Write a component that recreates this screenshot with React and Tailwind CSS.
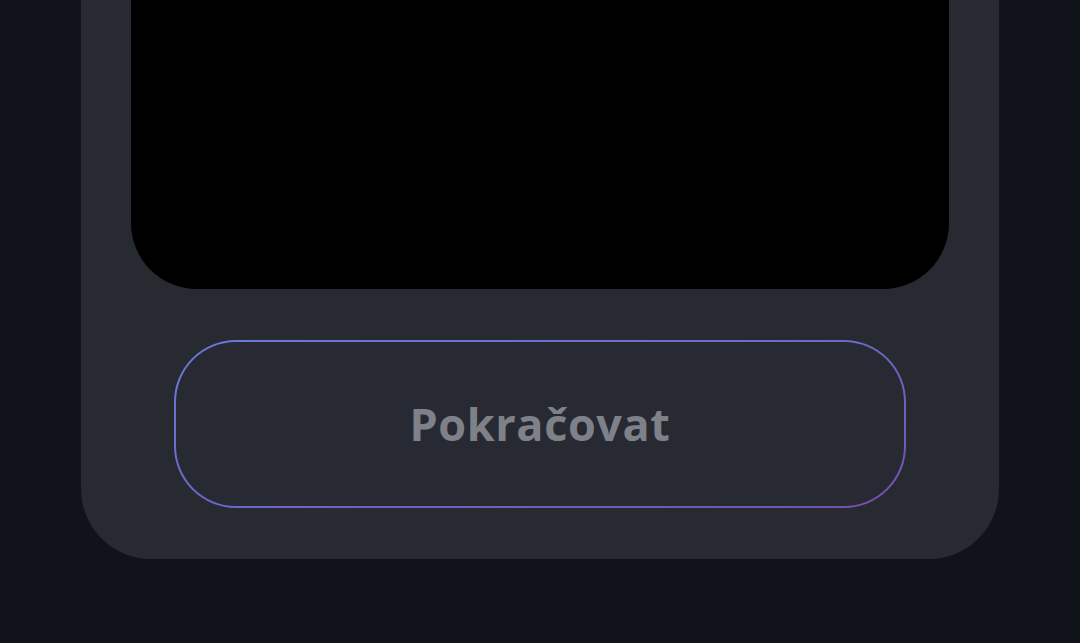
import React from 'react';

export default function App() {
  return (
    <div className="h-[643px] w-[1080px] overflow-hidden bg-[#10131a] flex flex-col justify-end pb-[84px] px-[81px]">
      <div className="bg-[#282a32] rounded-b-[70px] px-[50px] pt-[50px] pb-[51px]">
        <div className="h-[420px] bg-black rounded-b-[66px]" />
        <div className="mt-[51px] mx-[43px] h-[168px] rounded-[62px] p-[2px] bg-linear-to-br from-[#6a7ad8] via-[#6c68c8] to-[#7450ae]">
          <button className="w-full h-full rounded-[60px] bg-[#272a33] flex items-center justify-center">
            <span className="text-[45px] font-bold text-[#7f8188] tracking-[0.6px]" style={{ fontFamily: '"Open Sans", sans-serif' }}>
              Pokračovat
            </span>
          </button>
        </div>
      </div>
    </div>
  );
}
